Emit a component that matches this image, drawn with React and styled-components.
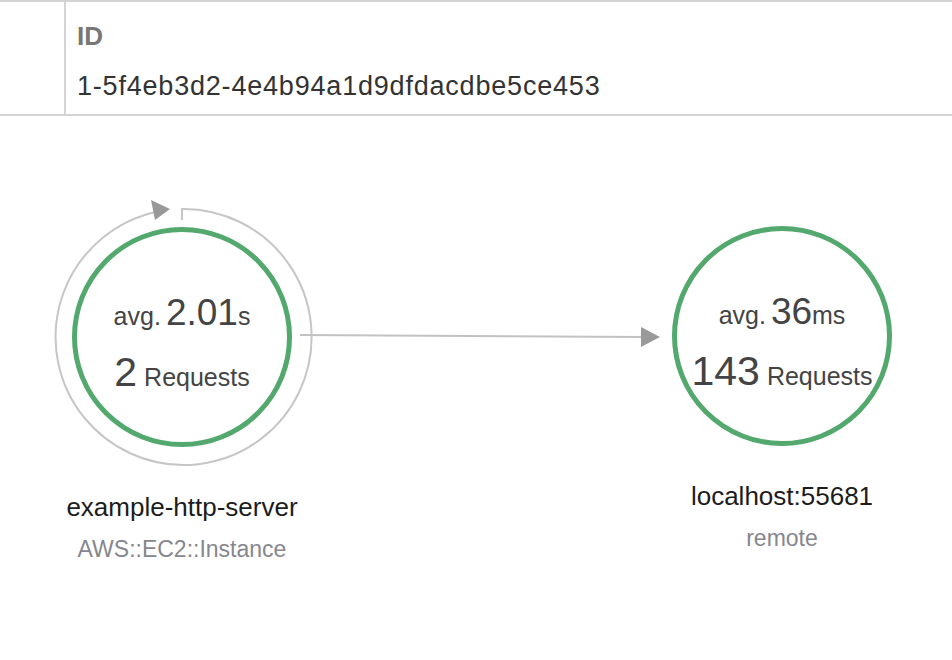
import React from 'react';
import styled, { createGlobalStyle } from 'styled-components';

const GlobalStyle = createGlobalStyle`
  html, body {
    margin: 0;
    padding: 0;
    background: #ffffff;
  }
  body {
    font-family: 'Liberation Sans', Arial, Helvetica, sans-serif;
    color: #333333;
  }
`;

const Page = styled.div`
  width: 952px;
  height: 660px;
  overflow: hidden;
  display: flex;
  flex-direction: column;
`;

const HeaderRow = styled.div`
  display: flex;
  border-top: 2px solid #d4d4d4;
  border-bottom: 2px solid #d4d4d4;
`;

const SpacerCell = styled.div`
  width: 64px;
  border-right: 2px solid #d4d4d4;
`;

const FieldCell = styled.div`
  flex: 1;
  padding: 19px 0 13px 11px;
`;

const FieldLabel = styled.div`
  font-size: 26px;
  line-height: 30px;
  font-weight: bold;
  color: #777777;
`;

const FieldValue = styled.div`
  margin-top: 20px;
  font-size: 27px;
  line-height: 30px;
  letter-spacing: 0.8px;
  color: #333333;
`;

const Canvas = styled.div`
  position: relative;
  flex: 1;
`;

const EdgeLayer = styled.svg`
  position: absolute;
  left: 0;
  top: 0;
  width: 952px;
  height: 542px;
  pointer-events: none;
`;

const Node = styled.div`
  position: absolute;
  width: 220px;
  display: flex;
  flex-direction: column;
  align-items: center;
`;

const Circle = styled.div`
  box-sizing: border-box;
  width: 220px;
  height: 220px;
  border-radius: 50%;
  border: 5px solid #53a86d;
  display: flex;
  flex-direction: column;
  align-items: center;
  padding-top: 62px;
  gap: 21px;
  color: #444444;
`;

const StatLine = styled.div`
  display: flex;
  align-items: baseline;
  white-space: nowrap;
`;

const Small = styled.span`
  font-size: 25px;
  line-height: 1;
  margin-left: ${p => (p.$gap ? '7px' : '0')};
`;

const Big = styled.span`
  font-size: ${p => p.$size || 37}px;
  line-height: 1;
  margin-left: ${p => (p.$gap ? '5px' : '0')};
`;

const NodeName = styled.div`
  margin-top: ${p => (p.$loop ? 45 : 35)}px;
  font-size: 26px;
  line-height: 30px;
  color: #1c1c1c;
  white-space: nowrap;
`;

const NodeType = styled.div`
  margin-top: 13px;
  font-size: 23px;
  line-height: 28px;
  color: #86878d;
  white-space: nowrap;
`;

const nodes = [
  {
    id: 'server',
    cx: 182,
    cy: 221,
    avg: '2.01',
    unit: 's',
    count: '2',
    name: 'example-http-server',
    type: 'AWS::EC2::Instance',
    loop: true,
  },
  {
    id: 'remote',
    cx: 782,
    cy: 220,
    avg: '36',
    unit: 'ms',
    count: '143',
    name: 'localhost:55681',
    type: 'remote',
    loop: false,
  },
];

const Edges = () => (
  <EdgeLayer viewBox="0 0 952 542">
    <path
      d="M182 104 L182 93 A128 128 0 1 1 156 96"
      fill="none"
      stroke="#c6c6c6"
      strokeWidth="2"
    />
    <polygon points="151,84 155,104 170,93" fill="#999999" />
    <line x1="300" y1="219" x2="644" y2="221" stroke="#c2c2c2" strokeWidth="2" />
    <polygon points="641,211 641,231 660,221" fill="#999999" />
  </EdgeLayer>
);

const App = () => (
  <Page>
    <GlobalStyle />
    <HeaderRow>
      <SpacerCell />
      <FieldCell>
        <FieldLabel>ID</FieldLabel>
        <FieldValue>1-5f4eb3d2-4e4b94a1d9dfdacdbe5ce453</FieldValue>
      </FieldCell>
    </HeaderRow>
    <Canvas>
      <Edges />
      {nodes.map(n => (
        <Node key={n.id} style={{ left: n.cx - 110, top: n.cy - 110 }}>
          <Circle>
            <StatLine>
              <Small>avg.</Small>
              <Big $gap>{n.avg}</Big>
              <Small>{n.unit}</Small>
            </StatLine>
            <StatLine>
              <Big $size={41}>{n.count}</Big>
              <Small $gap>Requests</Small>
            </StatLine>
          </Circle>
          <NodeName $loop={n.loop}>{n.name}</NodeName>
          <NodeType>{n.type}</NodeType>
        </Node>
      ))}
    </Canvas>
  </Page>
);

export default App;
